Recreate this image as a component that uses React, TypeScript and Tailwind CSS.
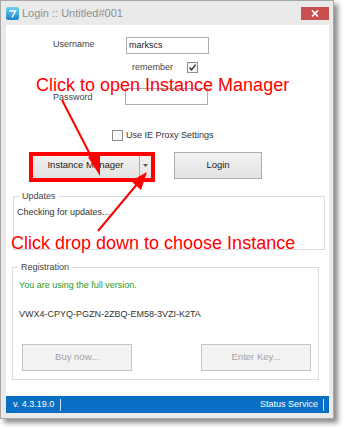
import React from "react";

const ui = "font-['Liberation_Sans',Arial,sans-serif]";

function Check({ checked }: { checked?: boolean }) {
  return (
    <div className="w-[11px] h-[11px] border border-[#8f8f8f] bg-[#f7f7f7] flex items-center justify-center">
      {checked && (
        <svg width="9" height="9" viewBox="0 0 9 9">
          <path d="M1.5 4.5 L3.6 6.8 L7.6 1.6" fill="none" stroke="#333" strokeWidth="1.4" />
        </svg>
      )}
    </div>
  );
}

function Btn({ children, className = "", disabled }: { children?: React.ReactNode; className?: string; disabled?: boolean }) {
  return (
    <div
      className={
        "h-[27px] flex items-center justify-center text-[9.5px] border " +
        (disabled
          ? "border-[#c4c4c4] bg-[#f2f2f2] text-[#a3a3a3] "
          : "border-[#acacac] bg-gradient-to-b from-[#f2f2f2] to-[#e3e3e3] text-[#222] ") +
        className
      }
    >
      {children}
    </div>
  );
}

export default function App() {
  return (
    <div className={"relative w-[344px] h-[429px] bg-white " + ui}>
      {/* window */}
      <div className="w-[334px] h-[419px] bg-[#eaeaea] border border-[#a8a8a8] shadow-[4px_4px_5px_rgba(0,0,0,0.45)] flex flex-col px-[5px] pr-[4px]">
        {/* title bar */}
        <div className="h-[24px] flex items-center shrink-0">
          <svg width="13" height="13" viewBox="0 0 13 13" className="mt-[1px]">
            <defs>
              <linearGradient id="ig" x1="0" y1="0" x2="0" y2="1">
                <stop offset="0" stopColor="#6fd0f3" />
                <stop offset="1" stopColor="#1b86c6" />
              </linearGradient>
            </defs>
            <rect x="0" y="0" width="13" height="13" rx="2" fill="url(#ig)" />
            <path d="M3.5 4 H9.5 L6 10.5" fill="none" stroke="#fff" strokeWidth="1.4" />
          </svg>
          <span className="ml-[3px] text-[11px] text-[#8e8e8e] leading-none mt-[1px]">Login :: Untitled#001</span>
          <div className="ml-auto mt-[1px] w-[28px] h-[13px] bg-[#c85050] flex items-center justify-center">
            <svg width="8" height="7" viewBox="0 0 8 7">
              <path d="M1 0.5 L7 6.5 M7 0.5 L1 6.5" stroke="#fff" strokeWidth="1.7" />
            </svg>
          </div>
        </div>

        {/* content */}
        <div className="h-[371px] bg-white flex flex-col shrink-0 text-[9px] text-[#333]">
          {/* username */}
          <div className="mt-[12px] h-[17px] flex items-center">
            <span className="ml-[47px] w-[73px] text-[#444] -mt-[2px]">Username</span>
            <div className="w-[83px] h-[17px] border border-[#abadb3] bg-white flex items-center pl-[2px] text-[#222]">markscs</div>
          </div>
          {/* remember */}
          <div className="mt-[7px] h-[12px] flex items-center">
            <span className="ml-[126px] w-[55px] text-[#444] mt-[1px]">remember</span>
            <Check checked />
          </div>
          {/* password */}
          <div className="mt-[15px] h-[17px] flex items-center">
            <span className="ml-[47px] w-[72px] text-[#444] mt-[3px]">Password</span>
            <div className="w-[83px] h-[17px] border border-[#abadb3] bg-white" />
          </div>
          {/* IE proxy */}
          <div className="mt-[25px] h-[11px] flex items-center">
            <div className="ml-[106px]">
              <Check />
            </div>
            <span className="ml-[3px] text-[#333]">Use IE Proxy Settings</span>
          </div>
          {/* buttons */}
          <div className="mt-[11px] h-[27px] flex">
            <Btn className="ml-[25px] w-[121px] justify-start">
              <span className="w-[107px] text-center">Instance Manager</span>
              <div className="h-full w-px bg-[#acacac]" />
              <div className="flex-1 flex items-center justify-center">
                <svg width="5" height="3" viewBox="0 0 5 3">
                  <path d="M0 0 H5 L2.5 3 Z" fill="#555" />
                </svg>
              </div>
            </Btn>
            <Btn className="ml-[22px] w-[88px]">Login</Btn>
          </div>
          {/* updates */}
          <div className="mt-[17px] ml-[7px] w-[312px] h-[54px] border border-[#d9dde0] flex flex-col">
            <span className="-mt-[7px] ml-[5px] px-[3px] self-start bg-white leading-[12px] text-[#444]">Updates</span>
            <span className="mt-[4px] ml-[3px] leading-[12px] text-[#333]">Checking for updates...</span>
          </div>
          {/* registration */}
          <div className="mt-[17px] ml-[6px] w-[307px] h-[113px] border border-[#d9dde0] flex flex-col pl-[6px]">
            <span className="-mt-[7px] -ml-[1px] px-[3px] self-start bg-white leading-[12px] text-[#444]">Registration</span>
            <span className="mt-[6px] leading-[12px] text-[#1f9a1f]">You are using the full version.</span>
            <span className="mt-[17px] leading-[12px] text-[#333]">VWX4-CPYQ-PGZN-2ZBQ-EM58-3VZI-K2TA</span>
            <div className="mt-[24px] flex">
              <Btn disabled className="ml-[3px] w-[110px]">Buy now...</Btn>
              <Btn disabled className="ml-[69px] w-[110px]">Enter Key...</Btn>
            </div>
          </div>
        </div>

        {/* status bar */}
        <div className="h-[17px] bg-[#0870c4] flex items-center text-white text-[9px] shrink-0">
          <span className="ml-[7px]">v. 4.3.19.0</span>
          <div className="ml-[6px] w-px h-[12px] bg-[#cfe3f3]" />
          <span className="ml-auto">Status Service</span>
          <div className="ml-[5px] mr-[5px] w-px h-[12px] bg-[#cfe3f3]" />
        </div>
      </div>

      {/* annotations */}
      <div className="absolute left-[29px] top-[152px] w-[126px] h-[30px] border-[4px] border-[#ff0000]" />
      <svg className="absolute left-0 top-0" width="344" height="429" viewBox="0 0 344 429">
        <line x1="62" y1="100" x2="95" y2="164" stroke="#ff0000" strokeWidth="2" />
        <polygon points="100,176 88,157 100,152" fill="#ff0000" />
        <line x1="98" y1="231" x2="138" y2="183" stroke="#ff0000" strokeWidth="2" />
        <polygon points="147,172 141,190 131,181" fill="#ff0000" />
      </svg>
      <span className="absolute left-[36px] top-[75px] text-[18px] leading-[20px] text-[#ff0000] font-['Liberation_Sans',Arial,sans-serif] whitespace-nowrap">
        Click to open Instance Manager
      </span>
      <span className="absolute left-[11px] top-[233px] text-[18px] leading-[20px] text-[#ff0000] font-['Liberation_Sans',Arial,sans-serif] whitespace-nowrap">
        Click drop down to choose Instance
      </span>
    </div>
  );
}
